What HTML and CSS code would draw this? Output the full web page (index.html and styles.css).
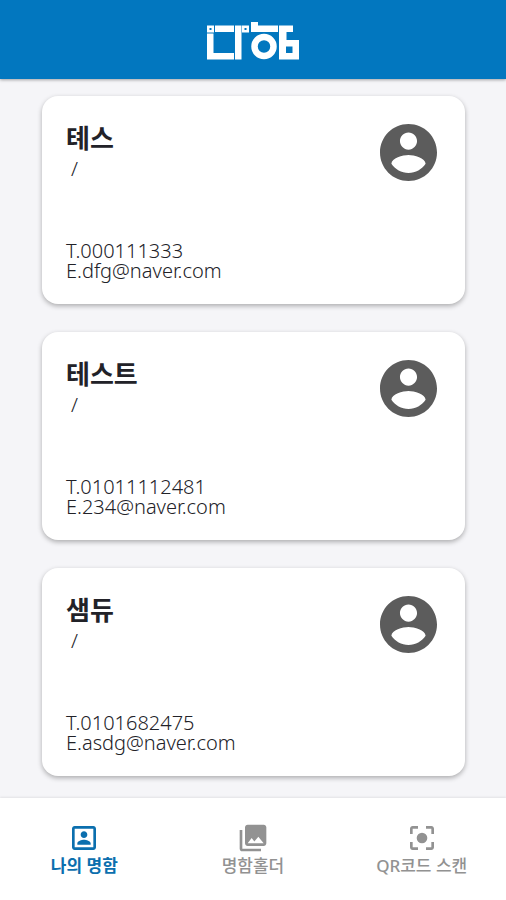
FILE: index.html
```html
<!DOCTYPE html>
<html lang="ko">
<head>
<meta charset="utf-8">
<meta name="viewport" content="width=device-width, initial-scale=1">
<title>나함</title>
<link rel="stylesheet" href="styles.css">
</head>
<body>
<svg class="defs" aria-hidden="true">
  <symbol id="person" viewBox="2 2 20 20"><path d="M12 2C6.480 2 2 6.480 2 12s4.480 10 10 10 10-4.480 10-10S17.520 2 12 2zm0 3c1.660 0 3 1.340 3 3s-1.340 3-3 3-3-1.340-3-3 1.340-3 3-3zm0 14.200c-2.500 0-4.710-1.280-6-3.220.030-1.990 4-3.080 6-3.080 1.990 0 5.970 1.090 6 3.080-1.290 1.940-3.500 3.220-6 3.220z"/></symbol>
</svg>
<header class="header">
  <svg class="logo" viewBox="0 0 94 38" role="img" aria-label="나함">
    <path fill-rule="evenodd" d="M1 3.500h7v7H1zM3.500 6v2h2V6zM36 3.500h7v7h-7zM38.500 6v2h2V6z"/>
    <path d="M9 3.500h19v6.500H9zM1 11.500h6.500V31H28v6.500H1zM29 3.500h6.500v34H29zM45 0h7v3.500h20V10H45z"/>
    <circle class="ring" cx="58" cy="24.500" r="9.500"/>
    <path fill-rule="evenodd" d="M73 3.500h14V10h-6.500v8H93v19.500H73zM80 24.500V31h6.500v-6.500z"/>
  </svg>
</header>
<main class="cards">
  <article class="card">
    <div class="top">
      <div><h2 class="name">톄스</h2><p class="role">/</p></div>
      <svg class="avatar" aria-hidden="true"><use href="#person"/></svg>
    </div>
    <p class="contact">T.000111333<br>E.dfg@naver.com</p>
  </article>
  <article class="card">
    <div class="top">
      <div><h2 class="name">테스트</h2><p class="role">/</p></div>
      <svg class="avatar" aria-hidden="true"><use href="#person"/></svg>
    </div>
    <p class="contact">T.01011112481<br>E.234@naver.com</p>
  </article>
  <article class="card">
    <div class="top">
      <div><h2 class="name">샘듀</h2><p class="role">/</p></div>
      <svg class="avatar" aria-hidden="true"><use href="#person"/></svg>
    </div>
    <p class="contact">T.0101682475<br>E.asdg@naver.com</p>
  </article>
</main>
<nav class="tabs">
  <a class="tab active" href="#cards">
    <svg class="icon" viewBox="0 0 24 24" aria-hidden="true"><path d="M19 3H5c-1.110 0-2 .9-2 2v14c0 1.100.890 2 2 2h14c1.100 0 2-.9 2-2V5c0-1.100-.9-2-2-2zm0 16H5V5h14v14zM12 12c1.380 0 2.500-1.120 2.500-2.500S13.380 7 12 7 9.500 8.120 9.500 9.500 10.620 12 12 12zM7 17h10v-1c0-1.800-3.300-2.700-5-2.700S7 14.200 7 16z"/></svg>
    나의 명함
  </a>
  <a class="tab" href="#holder">
    <svg class="icon" viewBox="0 0 24 24" aria-hidden="true"><path d="M22 16V4c0-1.100-.9-2-2-2H8c-1.100 0-2 .9-2 2v12c0 1.100.9 2 2 2h12c1.100 0 2-.9 2-2zm-11-4l2.030 2.710L16 11l4 5H8l3-4zM2 6v14c0 1.100.9 2 2 2h14v-2H4V6H2z"/></svg>
    명함홀더
  </a>
  <a class="tab" href="#scan">
    <svg class="icon" viewBox="0 0 24 24" aria-hidden="true"><path d="M5 15H3v4c0 1.100.9 2 2 2h4v-2H5v-4zM5 5h4V3H5c-1.100 0-2 .9-2 2v4h2V5zm14-2h-4v2h4v4h2V5c0-1.100-.9-2-2-2zm0 16h-4v2h4c1.100 0 2-.9 2-2v-4h-2v4z"/><circle cx="12" cy="12" r="4"/></svg>
    QR코드 스캔
  </a>
</nav>
</body>
</html>
```
FILE: styles.css
```css
* { box-sizing: border-box; }
body {
  margin: 0;
  min-height: 100vh;
  display: flex;
  flex-direction: column;
  background: #f5f5f8;
  color: #222228;
  font-family: "Noto Sans", "Noto Sans CJK KR", sans-serif;
}
h2, p { margin: 0; }
.defs { display: none; }
.header {
  display: flex;
  justify-content: center;
  align-items: center;
  height: 79px;
  padding-top: 3px;
  background: #0277bf;
  box-shadow: 0 1px 3px rgba(0, 0, 0, .35);
}
.logo { width: 94px; height: 38px; fill: #fff; }
.ring { fill: none; stroke: #fff; stroke-width: 6.500; }
.cards {
  flex: 1;
  display: flex;
  flex-direction: column;
  gap: 28px;
  padding: 17px 41px 21px 42px;
}
.card {
  display: flex;
  flex-direction: column;
  justify-content: space-between;
  min-height: 208px;
  padding: 24px 28px 23px 24px;
  border-radius: 16px;
  background: #fff;
  box-shadow: 0 2px 5px rgba(0, 0, 0, .3);
}
.top { display: flex; justify-content: space-between; }
.name { font-size: 26px; line-height: 36px; font-weight: 700; }
.role { padding-left: 5px; font-size: 20px; line-height: 26px; font-weight: 300; }
.avatar { width: 57px; height: 57px; margin-top: 4px; fill: #5c5c5c; }
.contact { font-size: 20px; line-height: 20px; font-weight: 300; }
.tabs {
  display: grid;
  grid-template-columns: repeat(3, 1fr);
  height: 102px;
  background: #fff;
  box-shadow: 0 -1px 2px rgba(0, 0, 0, .08);
}
.tab {
  display: flex;
  flex-direction: column;
  align-items: center;
  padding-top: 24px;
  color: #929292;
  font-size: 17px;
  line-height: 24px;
  font-weight: 500;
  text-decoration: none;
}
.active { color: #0b6fae; font-weight: 700; }
.icon { width: 32px; height: 32px; fill: currentColor; }
```
